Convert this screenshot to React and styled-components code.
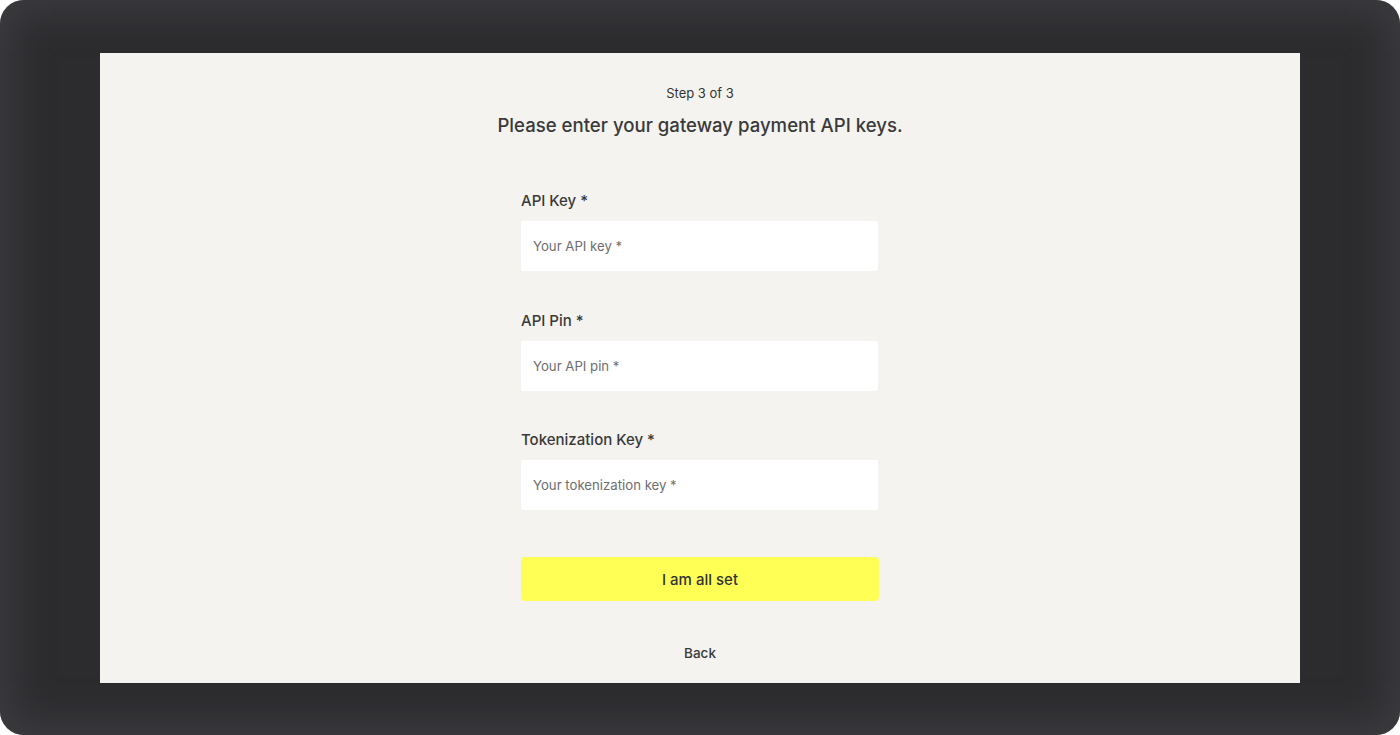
import React from 'react';
import styled, { createGlobalStyle } from 'styled-components';

const GlobalStyle = createGlobalStyle`
  html, body {
    margin: 0;
    padding: 0;
    background: #ffffff;
  }
  body {
    font-family: Inter, "Noto Sans", sans-serif;
    -webkit-font-smoothing: antialiased;
  }
  * {
    box-sizing: border-box;
  }
`;

const Frame = styled.div`
  width: 1400px;
  height: 735px;
  border-radius: 24px;
  background: #2c2c2f;
  box-shadow: inset 0 0 36px 14px rgba(64, 64, 68, 0.75);
  padding: 53px 100px 52px;
  display: flex;
`;

const Panel = styled.main`
  flex: 1;
  background: #f4f3ef;
  display: flex;
  flex-direction: column;
  align-items: center;
  padding-top: 32px;
  color: #333333;
`;

const Step = styled.div`
  font-size: 13px;
  line-height: 16px;
  color: #333333;
`;

const Title = styled.h1`
  margin: 12px 0 0;
  font-size: 18.6px;
  line-height: 24px;
  font-weight: 500;
  color: #3a3a3a;
`;

const Form = styled.form`
  width: 358px;
  margin-top: 54px;
  display: flex;
  flex-direction: column;
  gap: 39.5px;
`;

const Field = styled.label`
  display: flex;
  flex-direction: column;
  gap: 10px;
`;

const Label = styled.span`
  font-size: 15px;
  line-height: 20px;
  font-weight: 500;
  color: #3a3a3a;
`;

const Input = styled.input`
  width: 357px;
  height: 50px;
  border: none;
  border-radius: 2px;
  background: #ffffff;
  padding: 0 12px;
  font-family: inherit;
  font-size: 13.2px;
  color: #333333;

  &::placeholder {
    color: #6e6e6e;
  }

  &:focus {
    outline: none;
  }
`;

const Submit = styled.button`
  margin-top: 7.5px;
  width: 358px;
  height: 44px;
  border: none;
  border-radius: 4px;
  background: #ffff55;
  font-family: inherit;
  font-size: 15px;
  font-weight: 500;
  color: #333333;
  cursor: pointer;
`;

const BackLink = styled.button`
  margin-top: 41px;
  border: none;
  background: transparent;
  font-family: inherit;
  font-size: 13.5px;
  line-height: 20px;
  font-weight: 500;
  color: #3a3a3a;
  cursor: pointer;
`;

const fields = [
  { label: 'API Key *', placeholder: 'Your API key *' },
  { label: 'API Pin *', placeholder: 'Your API pin *' },
  { label: 'Tokenization Key *', placeholder: 'Your tokenization key *' },
];

const App = () => {
  return (
    <>
      <GlobalStyle />
      <Frame>
        <Panel>
          <Step>Step 3 of 3</Step>
          <Title>Please enter your gateway payment API keys.</Title>
          <Form onSubmit={(e) => e.preventDefault()}>
            {fields.map((f) => (
              <Field key={f.label}>
                <Label>{f.label}</Label>
                <Input type="text" placeholder={f.placeholder} />
              </Field>
            ))}
            <Submit type="submit">I am all set</Submit>
          </Form>
          <BackLink type="button">Back</BackLink>
        </Panel>
      </Frame>
    </>
  );
};

export default App;
